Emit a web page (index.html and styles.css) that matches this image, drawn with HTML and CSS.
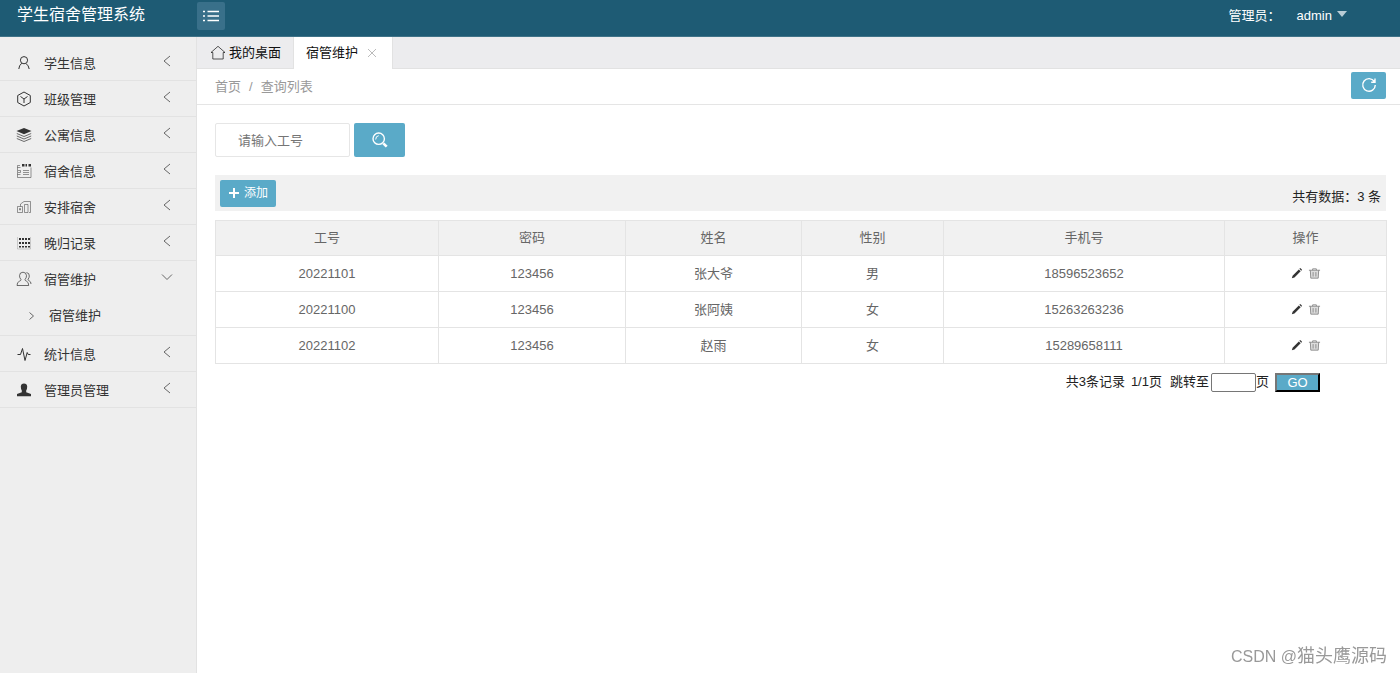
FILE: index.html
```html
<!DOCTYPE html>
<html lang="zh-CN">
<head>
<meta charset="utf-8">
<title>学生宿舍管理系统</title>
<link rel="stylesheet" href="styles.css">
</head>
<body>
<svg class="sprite" aria-hidden="true">
  <symbol id="left" viewBox="0 0 14 14"><path d="M10 2L4 7l6 5"/></symbol>
  <symbol id="pencil" viewBox="0 0 14 14"><path class="solid" d="M2 12.200l.8-2.900 6.700-6.700 2 2-6.700 6.700zM10.100 2l.6-.6q.4-.3.800 0l1.200 1.200q.3.400 0 .8l-.6.600z"/></symbol>
  <symbol id="trash" viewBox="0 0 14 14"><path class="wash" d="M3 4h8v8H3z"/><path d="M1 3.500h12M5 3.500V2h4v1.500M2.500 3.500l.5 8.500h8l.5-8.500M5.500 5.500v4.800M8.500 5.500v4.800"/></symbol>
</svg>
<header class="topbar">
  <div class="brand">学生宿舍管理系统</div>
  <button class="toggle" type="button" aria-label="菜单">
    <svg class="icon" viewBox="0 0 16 16"><path class="thick" d="M4.500 3.500H16M4.500 8H16M4.500 12.500H16M0 3.500h2M0 8h2M0 12.500h2"/></svg>
  </button>
  <div class="account">
    <span>管理员：</span>
    <button class="user" type="button">admin<span class="caret"></span></button>
  </div>
</header>
<div class="layout">
  <nav class="sidebar">
    <ul class="menu">
      <li><a class="entry" href="#"><svg class="icon" viewBox="0 0 16 16"><circle cx="8" cy="5.200" r="3.600"/><path d="M5.700 8.200Q3 10.500 2.800 14M10 8.500q2.700 2 3.200 5.500"/></svg><span class="label">学生信息</span><svg class="arrow"><use href="#left"/></svg></a></li>
      <li><a class="entry" href="#"><svg class="icon" viewBox="0 0 16 16"><path d="M8 1l6.300 3.500v7L8 15l-6.300-3.500v-7zM4.500 5.500L8 8l3.500-2.500M8 8v4"/></svg><span class="label">班级管理</span><svg class="arrow"><use href="#left"/></svg></a></li>
      <li><a class="entry" href="#"><svg class="icon" viewBox="0 0 16 16"><path class="solid" d="M8 1l7.500 3L8 7.200.5 4z"/><path class="faint" d="M.8 6.500L8 9.500l7.200-3M.8 9L8 12l7.200-3M.8 11.500L8 14.500l7.200-3"/></svg><span class="label">公寓信息</span><svg class="arrow"><use href="#left"/></svg></a></li>
      <li><a class="entry" href="#"><svg class="icon" viewBox="0 0 16 16"><path class="light" d="M4 2.500H1.500v12h13.500V4.500M1.500 4.500h3M1.500 11.500h3M2 7.500h2.500v2H2M7 7.500h6M7 9.500h6M7 11.500h6"/><path class="solid" d="M6 1h2.500v2.500H6zM9.500 1H11v2.500H9.500zM12.500 1h2.500v2.500h-2.500z"/></svg><span class="label">宿舍信息</span><svg class="arrow"><use href="#left"/></svg></a></li>
      <li><a class="entry" href="#"><svg class="icon" viewBox="0 0 16 16"><path class="light" d="M1.500 7.500h5v6h-5zM3.500 9.500h1v1.500h-1zM4.500 7.500V5L8 2.500h6.500v11H13M8.500 13.500v-8H12v8z"/></svg><span class="label">安排宿舍</span><svg class="arrow"><use href="#left"/></svg></a></li>
      <li><a class="entry" href="#"><svg class="icon" viewBox="0 0 16 16"><path class="dots" d="M4 3v9.500M7 3v9.500M10 3v9.500M13 3v9.500"/><path class="pale" d="M1.500 2v12h13V2"/></svg><span class="label">晚归记录</span><svg class="arrow"><use href="#left"/></svg></a></li>
      <li class="open"><a class="entry" href="#"><svg class="icon" viewBox="0 0 16 16"><path class="faint" d="M5 8.500Q3.500 7 3.500 4.700 3.600 1.200 7 1.200T10.500 4.700Q10.500 7 9 8.500q0 1.200 1.500 1.700Q12.700 11 12.700 14.500H1Q1 11 3.500 10.200 5 9.700 5 8.500zM10.500 1.500Q13.500 2 13.300 5q0 1.800-1.300 3.300 0 1 1.200 1.500 1.800.7 1.800 3.200"/></svg><span class="label">宿管维护</span><svg class="arrow" viewBox="0 0 14 14"><path d="M2 4.500l5 5 5-5"/></svg></a>
        <a class="subentry" href="#"><svg class="chevron" viewBox="0 0 10 10"><path d="M3.500 1.500L7.500 5l-4 3.500"/></svg>宿管维护</a></li>
      <li><a class="entry" href="#"><svg class="icon" viewBox="0 0 16 16"><path d="M1.500 8.500h3l2-6 2.500 12 2.200-8 1 2h2.300"/></svg><span class="label">统计信息</span><svg class="arrow"><use href="#left"/></svg></a></li>
      <li><a class="entry" href="#"><svg class="icon" viewBox="0 0 16 16"><path class="solid" d="M5.800 8.500Q4.800 7 4.800 4.500 5 1.500 8 1.500t3.200 3Q11.200 7 10.200 8.500v1.800l4.800 1.700v2.200H1V12l4.800-1.700z"/></svg><span class="label">管理员管理</span><svg class="arrow"><use href="#left"/></svg></a></li>
    </ul>
  </nav>
  <main class="main">
    <div class="tabs">
      <a class="tab" href="#"><svg class="icon" viewBox="0 0 16 16"><path class="faint" d="M1 7.500L8 1.300l7 6.200h-1.800V14H2.800V7.500z"/></svg>我的桌面</a>
      <a class="tab active" href="#">宿管维护<svg class="close" viewBox="0 0 10 10"><path d="M1 1l8 8M9 1L1 9"/></svg></a>
    </div>
    <div class="crumbs">
      <div class="trail"><a href="#">首页</a><span>/</span><a href="#">查询列表</a></div>
      <button class="btn refresh" type="button" aria-label="刷新"><svg class="icon" viewBox="0 0 16 16"><path class="thick" d="M13.300 4.500A6.300 6.300 0 1 0 14.300 8M14 1.500v3.800h-3.800"/></svg></button>
    </div>
    <div class="content">
      <form class="search">
        <input class="keyword" type="text" placeholder="请输入工号" aria-label="工号">
        <button class="btn find" type="button" aria-label="查询"><svg class="icon" viewBox="0 0 16 16"><circle class="thick" cx="6.700" cy="6.700" r="5.700"/><path d="M3.700 7.500Q3.700 4 6.700 3.700"/><path class="heavy" d="M11.300 11.300l3.400 3.400"/></svg></button>
      </form>
      <div class="toolbar">
        <button class="btn add" type="button"><svg class="plus" viewBox="0 0 12 12"><path d="M6 1v10M1 6h10"/></svg>添加</button>
        <span class="total">共有数据：3 条</span>
      </div>
      <table class="grid">
        <colgroup><col class="c-id"><col class="c-pass"><col class="c-name"><col class="c-sex"><col class="c-phone"><col class="c-act"></colgroup>
        <thead><tr><th>工号</th><th>密码</th><th>姓名</th><th>性别</th><th>手机号</th><th>操作</th></tr></thead>
        <tbody>
          <tr><td>20221101</td><td>123456</td><td>张大爷</td><td>男</td><td>18596523652</td><td><div class="actions"><button type="button" aria-label="编辑"><svg><use href="#pencil"/></svg></button><button class="del" type="button" aria-label="删除"><svg><use href="#trash"/></svg></button></div></td></tr>
          <tr><td>20221100</td><td>123456</td><td>张阿姨</td><td>女</td><td>15263263236</td><td><div class="actions"><button type="button" aria-label="编辑"><svg><use href="#pencil"/></svg></button><button class="del" type="button" aria-label="删除"><svg><use href="#trash"/></svg></button></div></td></tr>
          <tr><td>20221102</td><td>123456</td><td>赵雨</td><td>女</td><td>15289658111</td><td><div class="actions"><button type="button" aria-label="编辑"><svg><use href="#pencil"/></svg></button><button class="del" type="button" aria-label="删除"><svg><use href="#trash"/></svg></button></div></td></tr>
        </tbody>
      </table>
      <form class="pager">
        <span>共3条记录</span><span>1/1页</span>
        <label class="jump">跳转至<input type="text">页</label>
        <button class="go" type="button">GO</button>
      </form>
    </div>
  </main>
</div>
<div class="watermark"><span class="site">CSDN @</span>猫头鹰源码</div>
</body>
</html>
```
FILE: styles.css
```css
* { box-sizing: border-box; }
body {
  margin: 0;
  min-height: 100vh;
  display: flex;
  flex-direction: column;
  background: #fff;
  color: #222;
  font: 13px/20px "Liberation Sans", "Noto Sans CJK SC", sans-serif;
}
a { color: inherit; text-decoration: none; }
button, input { font: inherit; color: inherit; }
button { padding: 0; border: 0; background: none; cursor: pointer; }
svg { fill: none; stroke: currentColor; stroke-width: 1; }
.sprite { position: absolute; width: 0; height: 0; }
.icon { width: 16px; height: 16px; flex: none; }
.solid { fill: currentColor; stroke: none; }
.faint { opacity: .7; }
.light { opacity: .5; }
.pale { opacity: .2; }
.wash { fill: #ddd; stroke: none; }
.thick { stroke-width: 1.4; }
.heavy { stroke-width: 2.6; }
.dots { stroke-width: 2; stroke-dasharray: 2; }

.topbar {
  display: flex;
  height: 37px;
  padding: 0 53px 0 17px;
  background: #1e5b74;
  border-bottom: 1px solid #3f7388;
  color: #fff;
}
.brand { width: 180px; font-size: 16px; line-height: 30px; }
.toggle {
  display: grid;
  place-items: center;
  width: 28px;
  height: 28px;
  margin-top: 2px;
  border-radius: 2px;
  background: #39708a;
}
.account { display: flex; margin-left: auto; gap: 16px; line-height: 32px; }
.user { display: flex; gap: 5px; height: 32px; line-height: 32px; }
.caret { margin-top: 11px; border: 5px solid transparent; border-top: 6px solid #b9cdd6; border-bottom: 0; }

.layout { display: flex; flex: 1; }
.sidebar {
  flex: none;
  width: 197px;
  padding-top: 8px;
  background: #eee;
  border-right: 1px solid #e2e2e2;
}
.menu { margin: 0; padding: 0; list-style: none; }
.menu li { border-bottom: 1px solid #e2e2e2; color: #333; }
.entry { display: flex; align-items: center; height: 35px; padding: 0 22px 0 16px; }
.label { flex: 1; padding: 2px 0 0 12px; }
.arrow { width: 14px; height: 14px; margin-bottom: 4px; color: #666; }
.subentry { display: flex; align-items: center; gap: 13px; height: 39px; padding-left: 26px; }
.chevron { width: 10px; height: 10px; color: #666; }

.main { flex: 1; min-width: 0; }
.tabs { display: flex; height: 32px; background: #ececee; border-bottom: 1px solid #e2e2e2; color: #111; }
.tab { display: flex; align-items: center; gap: 3px; height: 32px; padding: 0 12px 0 13px; border-right: 1px solid #e2e2e2; }
.tab.active { gap: 9px; padding: 0 15px 0 12px; background: #fff; }
.close { width: 10px; height: 10px; color: #bbb; }
.crumbs {
  display: flex;
  align-items: center;
  justify-content: space-between;
  height: 36px;
  padding: 0 14px 0 18px;
  border-bottom: 1px solid #e5e5e5;
  color: #999;
}
.trail { display: flex; gap: 8px; }
.btn { display: flex; align-items: center; justify-content: center; border-radius: 2px; background: #5aaac8; color: #fff; }
.refresh { width: 35px; height: 27px; margin-bottom: 3px; }

.content { padding: 18px 14px 0 18px; }
.search { display: flex; gap: 4px; }
.keyword { width: 135px; height: 34px; padding: 0 22px; border: 1px solid #e6e6e6; border-radius: 2px; outline: 0; }
.keyword::placeholder { color: #757575; }
.find { width: 51px; height: 34px; }
.toolbar {
  display: flex;
  align-items: center;
  justify-content: space-between;
  height: 36px;
  margin: 18px 0 9px;
  padding: 0 5px;
  background: #f1f1f1;
}
.add { gap: 4px; width: 56px; height: 27px; font-size: 12px; }
.plus { width: 12px; height: 12px; stroke-width: 2; }
.total { padding-top: 8px; }

.grid { width: 100%; table-layout: fixed; border-collapse: collapse; color: #666; text-align: center; }
.grid th, .grid td { height: 36px; padding: 0; border: 1px solid #e4e4e4; font-weight: 400; }
.grid th { height: 35px; background: #f1f1f1; }
.c-id { width: 223px; }
.c-pass { width: 187px; }
.c-name { width: 176px; }
.c-sex { width: 142px; }
.c-phone { width: 281px; }
.c-act { width: 162px; }
.actions { display: flex; justify-content: center; gap: 5px; color: #333; }
.actions svg { display: block; width: 13px; height: 13px; }
.actions .del { color: #888; }

.pager { display: flex; align-items: center; margin-top: 8px; padding-right: 66px; justify-content: flex-end; gap: 6px; }
.jump { display: flex; align-items: center; padding-left: 2px; }
.jump input { width: 45px; height: 19px; margin-left: 2px; padding: 1px; border: 1px solid #767676; border-radius: 2px; }
.go { width: 45px; height: 19px; line-height: 15px; border: 2px outset #222; background: #5aaac8; color: #fff; }

.watermark { position: fixed; right: 13px; bottom: 3px; color: #999; font-size: 18px; line-height: 26px; }
.site { font-size: 16px; }
```
